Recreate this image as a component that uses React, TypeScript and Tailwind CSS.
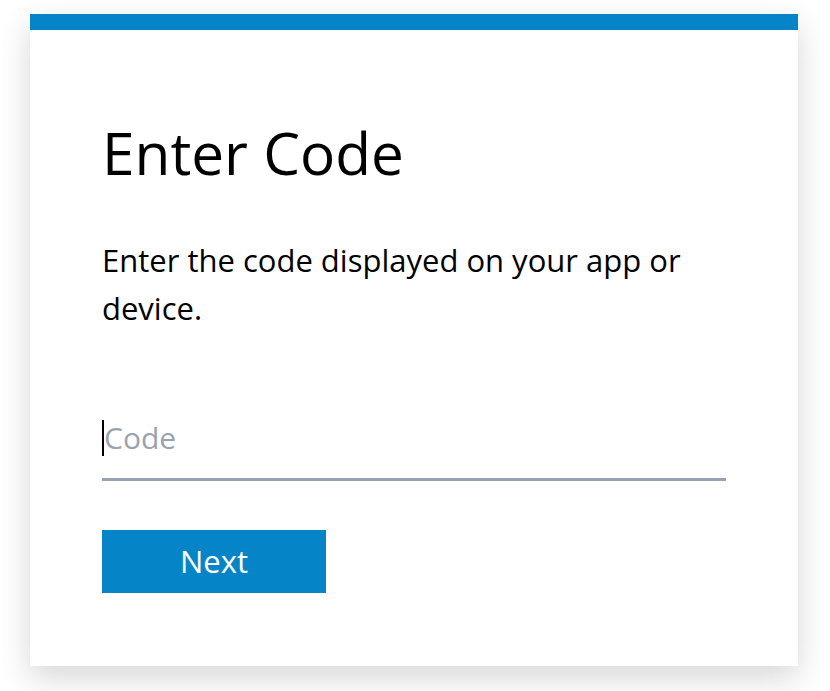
export default function App() {
  return (
    <div
      className="min-h-screen bg-white pt-[14px] px-[30px]"
      style={{ fontFamily: '"Open Sans", "Noto Sans", sans-serif' }}
    >
      <div className="w-[768px] bg-white shadow-[0_12px_30px_rgba(0,0,0,0.16)]">
        <div className="h-4 bg-[#0585c7]" />
        <div className="px-[72px] pt-[86px] pb-[73px]">
          <h1 className="text-[58.5px] leading-[72px] font-normal text-black">Enter Code</h1>
          <p className="mt-[48px] text-[31px] leading-[48px] text-black">
            Enter the code displayed on your app or device.
          </p>
          <div className="mt-[86px] border-b-[3px] border-[#97a2b5] pb-[20px]">
            <div className="flex items-center h-[40px]">
              <span className="w-[2px] h-[36px] bg-black" />
              <span className="text-[30px] text-[#9aa2b1] leading-none">Code</span>
            </div>
          </div>
          <button className="mt-[49px] w-[224px] h-[63px] bg-[#0585c7] text-white text-[31px]">
            Next
          </button>
        </div>
      </div>
    </div>
  )
}
